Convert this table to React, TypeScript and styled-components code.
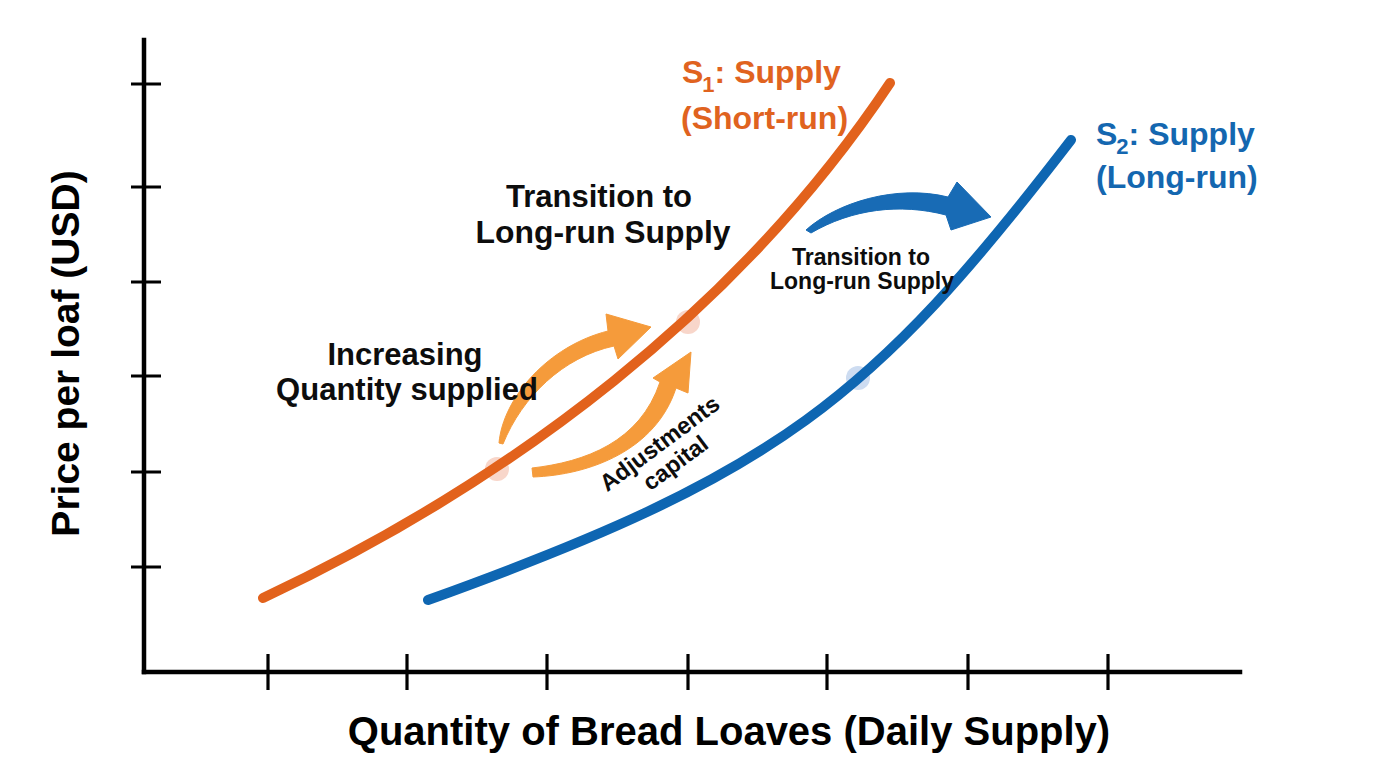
import React from "react";
import styled, { createGlobalStyle } from "styled-components";

const GlobalStyle = createGlobalStyle`
  html, body { margin: 0; padding: 0; background: #ffffff; }
  body { font-family: "Liberation Sans", Arial, sans-serif; }
  #root { width: 1376px; height: 768px; }
`;

const ORANGE = "#E2621C";
const ORANGE_LABEL = "#E0631F";
const ORANGE_LIGHT = "#F59B3B";
const BLUE = "#0E66B2";
const BLUE_LABEL = "#1467B0";
const BLUE_ARROW = "#186BB5";

const Figure = styled.div`
  display: grid;
  grid-template-columns: 131px 1245px;
  grid-template-rows: 700px 68px;
  width: 1376px;
  height: 768px;
  overflow: hidden;
  background: #ffffff;
`;

const YTitleCell = styled.div`
  grid-column: 1;
  grid-row: 1;
  display: flex;
  align-items: center;
  justify-content: center;
  padding-top: 7px;
  box-sizing: border-box;
`;

const YTitle = styled.span`
  display: inline-block;
  flex-shrink: 0;
  white-space: nowrap;
  font-family: "Liberation Sans", Arial, sans-serif;
  font-weight: 700;
  font-size: 39px;
  line-height: 1;
  color: #000;
  transform: rotate(-90deg);
`;

const Plot = styled.svg`
  grid-column: 2;
  grid-row: 1;
  display: block;
  width: 1245px;
  height: 700px;
`;

const XTitleCell = styled.div`
  grid-column: 1 / -1;
  grid-row: 2;
  display: flex;
  justify-content: center;
  align-items: flex-start;
  padding-left: 82px;
  padding-top: 11px;
  box-sizing: border-box;
`;

const XTitle = styled.span`
  white-space: nowrap;
  font-family: "Liberation Sans", Arial, sans-serif;
  font-weight: 700;
  font-size: 40px;
  line-height: 1;
  color: #000;
`;

const AxisLine = styled.line`
  stroke: #000;
  stroke-width: 4.5;
  stroke-linecap: square;
`;

const Tick = styled.line`
  stroke: #000;
  stroke-width: 3.2;
`;

const Curve = styled.path<{ $color: string }>`
  fill: none;
  stroke: ${(p) => p.$color};
  stroke-width: 10;
  stroke-linecap: round;
  stroke-linejoin: round;
`;

const Dot = styled.circle<{ $color: string }>`
  fill: ${(p) => p.$color};
`;

const ArrowShape = styled.path<{ $color: string }>`
  fill: ${(p) => p.$color};
  stroke: ${(p) => p.$color};
  stroke-width: 1;
  stroke-linejoin: round;
`;

const Label = styled.text<{ $size: number; $color?: string }>`
  font-family: "Liberation Sans", Arial, sans-serif;
  font-weight: 700;
  font-size: ${(p) => p.$size}px;
  fill: ${(p) => p.$color ?? "#0d0d0d"};
`;

const SHORT_RUN = "M263,598 C513,480.5 740,308 890,83";
const LONG_RUN = "M428,600 C778,474 871,400 1071,140";

const yTicks = [84, 187, 282, 376, 472, 567];
const xTicks = [268, 407, 547, 688, 827, 968, 1108];

export default function App() {
  return (
    <>
      <GlobalStyle />
      <Figure>
        <YTitleCell>
          <YTitle>Price per loaf (USD)</YTitle>
        </YTitleCell>

        <Plot viewBox="131 0 1245 700" xmlns="http://www.w3.org/2000/svg">
          {/* axes */}
          <AxisLine x1={144} y1={40} x2={144} y2={672} />
          <AxisLine x1={144} y1={672} x2={1240} y2={672} />
          {yTicks.map((y) => (
            <Tick key={`y${y}`} x1={127} y1={y} x2={161} y2={y} />
          ))}
          {xTicks.map((x) => (
            <Tick key={`x${x}`} x1={x} y1={654} x2={x} y2={690} />
          ))}

          {/* highlight dots */}
          <Dot $color="#F8D6CA" cx={497} cy={469} r={12} />
          <Dot $color="#F8D6CA" cx={688} cy={322} r={12} />
          <Dot $color="#CDDCF1" cx={858} cy={378} r={12} />

          {/* supply curves */}
          <Curve $color={ORANGE} d={SHORT_RUN} />
          <Curve $color={BLUE} d={LONG_RUN} />

          {/* orange arrows */}
          <ArrowShape
            $color={ORANGE_LIGHT}
            d="M499,443 C503,398 548,346 608,331 L606,314 L651,327 L618,359 L614,346 C563,357 522,397 503,444 Z"
          />
          <ArrowShape
            $color={ORANGE_LIGHT}
            d="M532,468 C585,462 640,442 660,382 L653,378 L691,352 L688,393 L676,388 C656,450 590,475 533,477 Z"
          />

          {/* blue arrow */}
          <ArrowShape
            $color={BLUE_ARROW}
            d="M806,230 C836,203 896,184 948,197 L957,182 L991,217 L951,230 L946,215 C900,203 852,209 811,233 Z"
          />

          {/* curve labels */}
          <Label $size={32} $color={ORANGE_LABEL} x={682} y={83}>
            S
            <tspan fontSize={22} dx={-1} dy={9}>
              1
            </tspan>
            <tspan dy={-9}>: Supply</tspan>
          </Label>
          <Label $size={32} $color={ORANGE_LABEL} x={681} y={129}>
            (Short-run)
          </Label>

          <Label $size={32} $color={BLUE_LABEL} x={1096} y={145}>
            S
            <tspan fontSize={22} dx={-1} dy={9}>
              2
            </tspan>
            <tspan dy={-9}>: Supply</tspan>
          </Label>
          <Label $size={32} $color={BLUE_LABEL} x={1096} y={188}>
            (Long-run)
          </Label>

          {/* annotations */}
          <Label $size={31} x={599} y={207} textAnchor="middle">
            Transition to
          </Label>
          <Label
            $size={31}
            x={603}
            y={243}
            textAnchor="middle"
            textLength={255}
            lengthAdjust="spacingAndGlyphs"
          >
            Long-run Supply
          </Label>

          <Label $size={31} x={405} y={365} textAnchor="middle">
            Increasing
          </Label>
          <Label $size={31} x={407} y={400} textAnchor="middle">
            Quantity supplied
          </Label>

          <Label $size={23} x={861} y={265} textAnchor="middle">
            Transition to
          </Label>
          <Label $size={23} x={862} y={289} textAnchor="middle">
            Long-run Supply
          </Label>

          <g transform="translate(605,494) rotate(-36.7)">
            <Label $size={23.5} x={74} y={0} textAnchor="middle">
              Adjustments
            </Label>
            <Label $size={23.5} x={75} y={25} textAnchor="middle">
              capital
            </Label>
          </g>
        </Plot>

        <XTitleCell>
          <XTitle>Quantity of Bread Loaves (Daily Supply)</XTitle>
        </XTitleCell>
      </Figure>
    </>
  );
}
